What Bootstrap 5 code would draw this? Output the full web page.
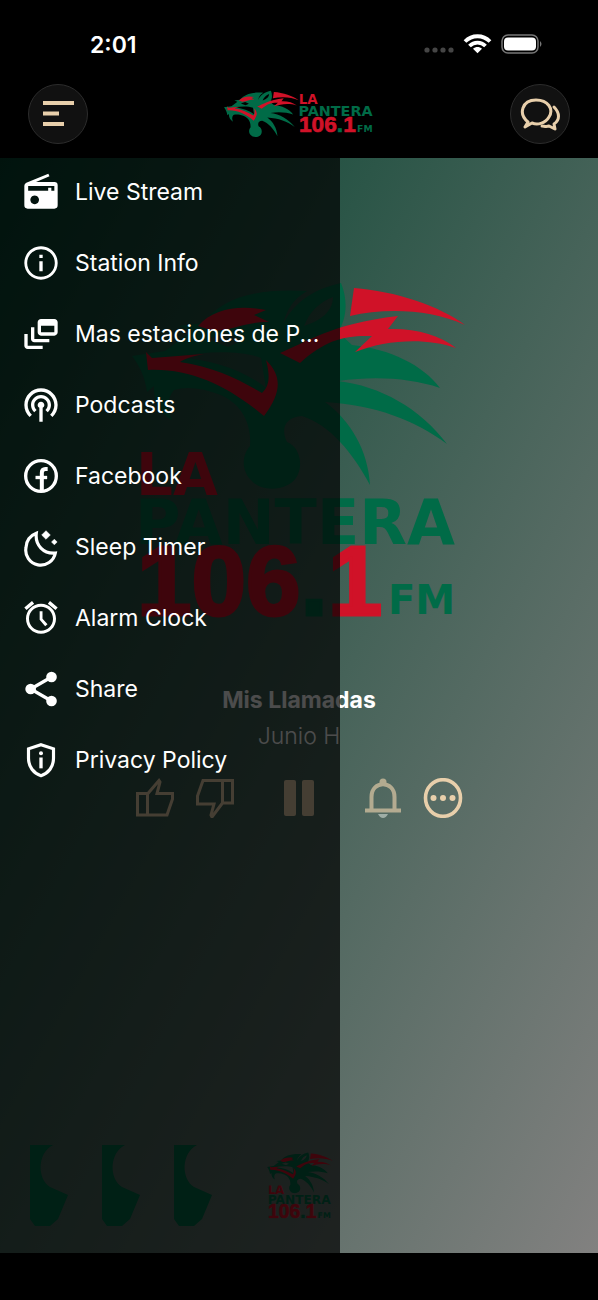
<!DOCTYPE html>
<html lang="es">
<head>
<meta charset="utf-8">
<meta name="viewport" content="width=device-width, initial-scale=1">
<title>La Pantera 106.1 FM</title>
<link href="https://cdn.jsdelivr.net/npm/bootstrap@5.3.0/dist/css/bootstrap.min.css" rel="stylesheet">
<style>
  :root { --sand: #e8cfab; --leaf: #006b47; --flame: #d01228; }
  body { font-family: Inter, "Liberation Sans", sans-serif; font-size: 23px; line-height: 32px; background: #000; color: #fff; }
  svg { display: block; }
  .status-bar { height: 84px; padding: 6px 56px 0 90px; font-weight: 600; }
  .top-bar { padding: 0 28px 14px; }
  .round-btn { width: 60px; height: 60px; border: 1px solid #2c2c2c; border-radius: 50%; background: #111; color: var(--sand); }
  .stage { background: linear-gradient(to bottom right, #04422e, #828180); padding-top: 122px; }
  .cover { width: 334px; max-width: 100%; }
  .song { margin-top: 64px; }
  .controls { gap: 20px; margin-top: 26px; }
  .controls button { width: 40px; height: 40px; color: var(--sand); }
  .controls .pause { margin: 0 24px; }
  .soft { opacity: .65; }
  .tiles { padding: 0 0 26px 30px; gap: 34px; }
  .tiles .brand { margin-left: 21px; }
  .drawer { width: 340px; background: rgba(0, 0, 0, .7); padding: 14px 20px 0 21px; gap: 31px; }
  .drawer a { gap: 14px; height: 40px; }
  .home-bar { height: 47px; }
  .wm { font-family: "DejaVu Sans", sans-serif; font-weight: 700; }
  .num { font-family: "Liberation Sans", sans-serif; font-weight: 700; }
</style>
</head>
<body>
<svg width="0" height="0" class="position-absolute" aria-hidden="true">
  <symbol id="head" viewBox="132 280 334 212">
    <path fill="var(--leaf)" fill-rule="evenodd" d="M132 356 L165 351 L192 331 L178 326 L203 323 C222 298 255 288 307 291 C292 300 287 310 283 324 C296 300 315 289 341 283 C348 300 347 318 338 332 L352 345 C390 349 423 365 440 388 C410 378 375 376 338 381 C380 386 420 408 447 444 C415 420 375 405 325 402 C350 420 368 450 370 485 C353 453 330 425 302 416 C286 417 280 428 287 442 C300 447 304 466 296 478 C286 492 260 492 251 480 C241 470 242 455 250 446 C252 422 240 402 218 394 C202 388 186 386 174 390 C167 398 167 409 172 420 C160 414 153 400 154 386 L147 392 C145 378 140 366 132 356Z M176 357 C205 351 240 350 261 358 L266 388 C245 371 215 360 176 357Z M207 339 L226 333 L243 340 L228 347Z M304 326 C310 311 320 302 333 297 C333 310 323 320 304 326Z"/>
    <path fill="var(--flame)" d="M354 288 C395 291 440 306 465 325 C430 309 385 308 350 316Z M280 353 C305 343 330 324 398 316 L388 329 C415 328 440 335 456 348 C425 337 385 340 355 352 L372 336 C345 335 325 340 300 363Z M198 326 C214 308 240 305 266 310 L254 315 L269 322 C250 321 232 330 214 331Z M146 352 L152 358 L204 354 C190 357 184 359 180 362 C214 367 238 379 262 393 C270 386 270 375 266 360 C282 376 282 392 264 416 C228 386 190 368 148 370Z"/>
  </symbol>
  <symbol id="wordmark" viewBox="137 450 324 168">
    <text class="wm" x="136" y="495" font-size="58" fill="var(--flame)">LA</text>
    <text class="wm" x="135" y="544" font-size="62" fill="var(--leaf)">PANTERA</text>
    <text class="num" x="137" y="615" font-size="98" fill="var(--flame)" stroke="var(--flame)" stroke-width="3">106<tspan fill="var(--leaf)" stroke="var(--leaf)">.</tspan>1</text>
    <text class="wm" x="388" y="614" font-size="40" fill="var(--leaf)">FM</text>
  </symbol>
  <symbol id="logo" viewBox="132 280 334 340">
    <use href="#head" x="132" y="280" width="334" height="212"/>
    <use href="#wordmark" x="137" y="450" width="324" height="168"/>
  </symbol>
  <symbol id="tile" viewBox="0 0 38 82">
    <path fill="var(--leaf)" d="M0 0H23C7 8 7 34 20 42L38 50L28 74L20 81H5L0 74Z"/>
  </symbol>
</svg>

<div class="d-flex flex-column min-vh-100">
  <header>
    <div class="status-bar d-flex align-items-center justify-content-between">
      <span>2:01</span>
      <svg width="118" height="24" viewBox="0 0 118 24" aria-hidden="true">
        <g fill="#454545"><circle cx="3" cy="17" r="2.6"/><circle cx="11" cy="17" r="2.6"/><circle cx="19" cy="17" r="2.6"/><circle cx="27" cy="17" r="2.6"/></g>
        <g fill="none" stroke="#fff" stroke-width="3.8"><path d="M41 8.500C48 1.500 59 1.500 66 8.500"/><path d="M45.500 13C50 8.500 57 8.500 61.500 13"/></g>
        <path fill="#fff" d="M49 15.800C51.500 13.400 55.500 13.400 58 15.800L53.500 20.300Z"/>
        <rect x="78" y="2" width="36" height="18" rx="6" fill="none" stroke="#777" stroke-width="1.500"/>
        <rect x="80" y="4.500" width="32" height="13" rx="4" fill="#fff"/>
        <path fill="#777" d="M116 8Q119 11 116 14Z"/>
      </svg>
    </div>
    <div class="top-bar d-flex align-items-center justify-content-between">
      <button class="round-btn d-flex align-items-center justify-content-center p-0" type="button" aria-label="Menu">
        <svg width="32" height="28" viewBox="0 0 32 28" fill="currentColor"><path d="M1 1h31v4H1zM1 11.500h16v4H1zM1 22h21v4H1z"/></svg>
      </button>
      <div class="d-flex" role="img" aria-label="La Pantera 106.1 FM">
        <svg width="75" height="48"><use href="#head"/></svg>
        <svg class="mt-1" width="75" height="39"><use href="#wordmark"/></svg>
      </div>
      <button class="round-btn d-flex align-items-center justify-content-center p-0" type="button" aria-label="Chat">
        <svg width="40" height="34" viewBox="0 0 40 34" fill="none" stroke="currentColor" stroke-width="3" stroke-linejoin="round" stroke-linecap="round"><path d="M8 25C-2 17 2 3 16 3C28 3 34 12 29 20C25 27 17 28 12 26L5 30Z"/><path d="M34 10C40 16 40 23 34 27L35 32L29 29C26 30 24 29 22 29"/></svg>
      </button>
    </div>
  </header>

  <main class="stage position-relative flex-grow-1 d-flex flex-column">
    <svg class="cover mx-auto" viewBox="132 280 334 340" role="img" aria-label="La Pantera"><use href="#logo" x="132" y="280" width="334" height="340"/></svg>
    <div class="song text-center">
      <div class="fw-bold">Mis Llamadas</div>
      <div class="mt-1 fw-light">Junio H</div>
    </div>
    <div class="controls d-flex justify-content-center">
      <button class="btn p-0 border-0" type="button" aria-label="Like"><svg width="40" height="40" viewBox="0 0 40 40" fill="none" stroke="currentColor" stroke-width="3"><path d="M2.500 15.500H12.500V37H2.500ZM12.500 16L24 2.500L25 4L22 15.500H37.500V21L32 37H12.500"/></svg></button>
      <button class="btn p-0 border-0" type="button" aria-label="Dislike"><svg width="40" height="40" viewBox="0 0 40 40" fill="none" stroke="currentColor" stroke-width="3"><path d="M37.500 2.500H27.500V25H37.500ZM27.500 2.500H8L2.500 18V26H19L16 37L17 39L27.500 25"/></svg></button>
      <button class="pause btn p-0 border-0" type="button" aria-label="Pause"><svg width="40" height="40" viewBox="0 0 40 40" fill="currentColor"><rect x="5" y="2" width="12" height="36" rx="2"/><rect x="23" y="2" width="12" height="36" rx="2"/></svg></button>
      <button class="btn p-0 border-0 soft" type="button" aria-label="Alerts"><svg width="40" height="40" viewBox="0 0 40 40" fill="none" stroke="currentColor" stroke-width="4"><path d="M2 32.500H38M8.500 30.500V19C8.500 2 31.500 2 31.500 19V30.500"/><circle cx="20" cy="4" r="3.500" fill="currentColor" stroke="none"/><path fill="#c9d3cc" stroke="none" d="M15 36H25Q23 40 20 40Q17 40 15 36"/></svg></button>
      <button class="btn p-0 border-0" type="button" aria-label="More"><svg width="40" height="40" viewBox="0 0 40 40" fill="currentColor"><ellipse cx="20" cy="20" rx="17.500" ry="18.300" fill="none" stroke="currentColor" stroke-width="3.600"/><circle cx="10.500" cy="20" r="3"/><circle cx="20" cy="20" r="3"/><circle cx="29.500" cy="20" r="3"/></svg></button>
    </div>
    <div class="tiles d-flex align-items-end mt-auto" aria-hidden="true">
      <svg width="38" height="82"><use href="#tile"/></svg>
      <svg width="38" height="82"><use href="#tile"/></svg>
      <svg width="38" height="82"><use href="#tile"/></svg>
      <svg class="brand mb-2" width="66" height="67"><use href="#logo"/></svg>
    </div>

    <nav class="drawer position-absolute top-0 start-0 h-100 d-flex flex-column" aria-label="Menu">
      <a href="#live" class="d-flex align-items-center text-white text-decoration-none"><svg class="flex-shrink-0" width="40" height="40" viewBox="0 0 24 24" fill="currentColor"><path fill-rule="evenodd" d="M3.200 6.400L16.400 1L17.100 2.600L9 6H20a2 2 0 0 1 2 2V20a2 2 0 0 1-2 2H4a2 2 0 0 1-2-2V8.200a2 2 0 0 1 1.200-1.800ZM4.300 8.400V11.300H16.300V9.400H18.200V11.300H20V8.400ZM8.200 14.100a2.600 2.600 0 1 0 .01 0Z"/></svg><span>Live Stream</span></a>
      <a href="#info" class="d-flex align-items-center text-white text-decoration-none"><svg class="flex-shrink-0" width="40" height="40" viewBox="0 0 24 24" fill="currentColor"><path d="M11 7h2v2h-2zm0 4h2v6h-2zm1-9C6.480 2 2 6.480 2 12s4.480 10 10 10 10-4.480 10-10S17.520 2 12 2zm0 18.300c-4.600 0-8.300-3.700-8.300-8.300S7.400 3.700 12 3.700s8.300 3.700 8.300 8.300-3.700 8.300-8.300 8.300z"/></svg><span>Station Info</span></a>
      <a href="#stations" class="d-flex align-items-center text-white text-decoration-none"><svg class="flex-shrink-0" width="40" height="40" viewBox="0 0 24 24" fill="currentColor"><path d="M8 8H6v7c0 1.100.9 2 2 2h9v-2H8V8zM20 3h-8c-1.100 0-2 .9-2 2v6c0 1.100.9 2 2 2h8c1.100 0 2-.9 2-2V5c0-1.100-.9-2-2-2zm0 8h-8V7h8v4zM4 12H2v7c0 1.100.9 2 2 2h9v-2H4v-7z"/></svg><span class="text-nowrap">Mas estaciones de P...</span></a>
      <a href="#podcasts" class="d-flex align-items-center text-white text-decoration-none"><svg class="flex-shrink-0" width="40" height="40" viewBox="0 0 24 24" fill="currentColor"><path d="M14 12c0 .74-.4 1.380-1 1.720V22h-2v-8.280c-.6-.35-1-.98-1-1.720 0-1.100.9-2 2-2s2 .9 2 2zm-2-6c-3.310 0-6 2.690-6 6 0 1.740.75 3.310 1.940 4.400l1.420-1.420C8.530 14.250 8 13.190 8 12c0-2.210 1.790-4 4-4s4 1.790 4 4c0 1.190-.53 2.250-1.360 2.980l1.420 1.420C17.250 15.310 18 13.740 18 12c0-3.310-2.690-6-6-6zm0-4C6.480 2 2 6.480 2 12c0 2.850 1.200 5.410 3.110 7.240l1.420-1.420C4.980 16.360 4 14.290 4 12c0-4.410 3.590-8 8-8s8 3.590 8 8c0 2.290-.98 4.360-2.530 5.820l1.420 1.420C20.800 17.410 22 14.850 22 12c0-5.520-4.480-10-10-10z"/></svg><span>Podcasts</span></a>
      <a href="#facebook" class="d-flex align-items-center text-white text-decoration-none"><svg class="flex-shrink-0" width="40" height="40" viewBox="0 0 24 24" fill="none" stroke="currentColor" stroke-width="2"><circle cx="12" cy="12" r="9.200"/><path stroke-width="2.400" d="M12.500 21V10Q12.500 7.800 14.600 7.800H16"/><path d="M8.700 12.900H15.700"/></svg><span>Facebook</span></a>
      <a href="#sleep" class="d-flex align-items-center text-white text-decoration-none"><svg class="flex-shrink-0" width="40" height="40" viewBox="0 0 24 24" fill="currentColor"><path fill="none" stroke="currentColor" stroke-width="1.900" d="M9.200 3.700C5.500 5 3 8.400 3 12.300A8.700 8.700 0 0 0 20.600 15.600C13.600 16.200 8.300 11 9.200 3.700Z"/><path d="M15 2.200L17.600 4.800L15 7.400L12.400 4.800ZM20 7.300L21.700 9L20 10.700L18.300 9Z" stroke="currentColor" stroke-width=".3"/></svg><span>Sleep Timer</span></a>
      <a href="#alarm" class="d-flex align-items-center text-white text-decoration-none"><svg class="flex-shrink-0" width="40" height="40" viewBox="0 0 24 24" fill="currentColor"><path d="M22 5.720l-4.600-3.860-1.290 1.530 4.600 3.860L22 5.720zM7.880 3.390L6.600 1.860 2 5.710l1.290 1.530 4.590-3.850zM12.900 8H11.200v5l3.300 4 1.400-1.200-3-3.400V8zM12 3.500c-4.970 0-9 4.030-9 9s4.020 9 9 9c4.970 0 9-4.030 9-9s-4.030-9-9-9zm0 16.200c-3.970 0-7.200-3.230-7.200-7.200s3.230-7.200 7.200-7.200 7.200 3.230 7.200 7.200-3.230 7.200-7.200 7.200z"/></svg><span>Alarm Clock</span></a>
      <a href="#share" class="d-flex align-items-center text-white text-decoration-none"><svg class="flex-shrink-0" width="40" height="40" viewBox="0 0 24 24" fill="currentColor"><path fill="none" stroke="currentColor" stroke-width="2" d="M18.300 4.800L5.800 12L18.300 19.200"/><circle cx="18.300" cy="4.800" r="3.200"/><circle cx="5.800" cy="12" r="3.200"/><circle cx="18.300" cy="19.200" r="3.200"/></svg><span>Share</span></a>
      <a href="#privacy" class="d-flex align-items-center text-white text-decoration-none"><svg class="flex-shrink-0" width="40" height="40" viewBox="0 0 24 24" fill="currentColor"><path fill="none" stroke="currentColor" stroke-width="1.900" d="M12 2.800L19.500 5.300V11C19.500 16 16.500 20 12 21.400C7.500 20 4.500 16 4.500 11V5.300Z"/><circle cx="12" cy="8" r="1.200"/><path d="M11 10.500h2v6.500h-2z"/></svg><span>Privacy Policy</span></a>
    </nav>
  </main>
  <footer class="home-bar"></footer>
</div>
<script src="https://cdn.jsdelivr.net/npm/bootstrap@5.3.0/dist/js/bootstrap.bundle.min.js"></script>
</body>
</html>
